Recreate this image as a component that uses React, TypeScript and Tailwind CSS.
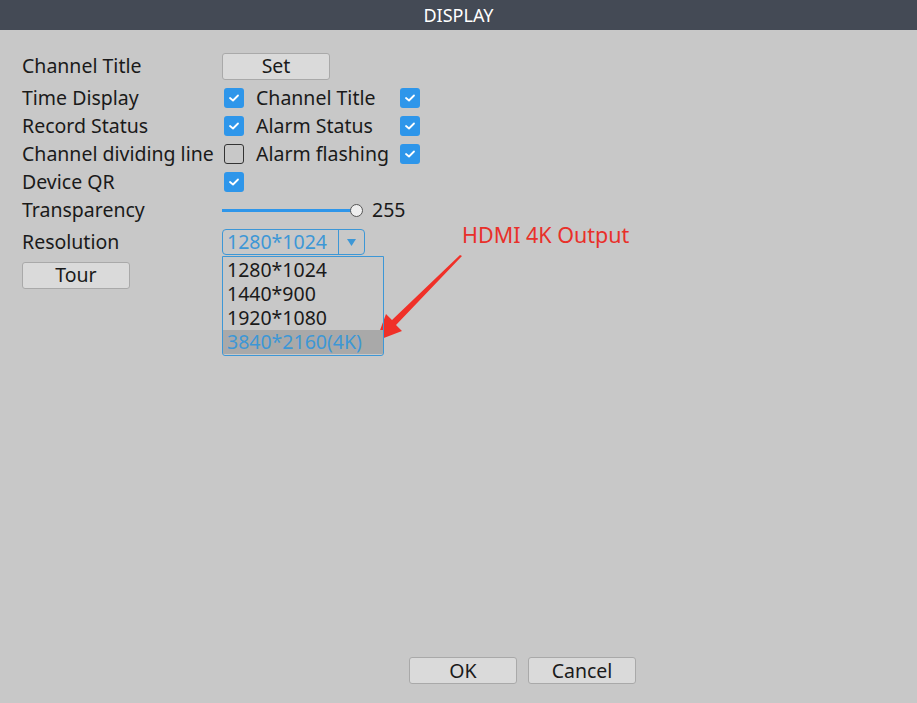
const font = { fontFamily: '"Noto Sans", "Open Sans", sans-serif' };

function Check({ on }: { on: boolean }) {
  if (!on) {
    return <div className="w-5 h-5 rounded-[3px] border-[1.5px] border-[#333]" />;
  }
  return (
    <div className="w-5 h-5 rounded-[3px] bg-[#2e96ea] flex items-center justify-center">
      <svg width="12" height="10" viewBox="0 0 12 10">
        <path d="M2 5 L5 7.5 L10 2.5" fill="none" stroke="#fff" strokeWidth="1.8" strokeLinecap="round" strokeLinejoin="round" />
      </svg>
    </div>
  );
}

function Btn({ label, className = "" }: { label: string; className?: string }) {
  return (
    <button
      className={`w-[108px] h-[27px] rounded-[3px] border border-[#a9a9a9] bg-[#dadada] text-[19.5px] leading-none text-[#1a1a1a] flex items-center justify-center ${className}`}
    >
      {label}
    </button>
  );
}

const options = ["1280*1024", "1440*900", "1920*1080", "3840*2160(4K)"];

export default function App() {
  return (
    <div className="w-[917px] h-[703px] bg-[#c8c8c8] flex flex-col text-[#1a1a1a] overflow-hidden" style={font}>
      <div className="h-[30px] bg-[#444a55] flex items-center justify-center text-white text-[18px]">
        DISPLAY
      </div>

      <div className="flex-1 relative pt-[22px] pl-[22px] text-[19.5px]">
        <div className="flex items-center h-[28px]">
          <p className="w-[200px]">Channel Title</p>
          <Btn label="Set" />
        </div>

        <div className="flex items-center h-[28px] mt-[4px]">
          <p className="w-[200px]">Time Display</p>
          <div className="flex items-center pl-[2px]">
            <Check on />
            <p className="w-[156px] pl-[12px]">Channel Title</p>
            <Check on />
          </div>
        </div>

        <div className="flex items-center h-[28px]">
          <p className="w-[200px]">Record Status</p>
          <div className="flex items-center pl-[2px]">
            <Check on />
            <p className="w-[156px] pl-[12px]">Alarm Status</p>
            <Check on />
          </div>
        </div>

        <div className="flex items-center h-[28px]">
          <p className="w-[200px] whitespace-nowrap">Channel dividing line</p>
          <div className="flex items-center pl-[2px]">
            <Check on={false} />
            <p className="w-[156px] pl-[12px]">Alarm flashing</p>
            <Check on />
          </div>
        </div>

        <div className="flex items-center h-[28px]">
          <p className="w-[200px]">Device QR</p>
          <div className="pl-[2px]">
            <Check on />
          </div>
        </div>

        <div className="flex items-center h-[28px]">
          <p className="w-[200px]">Transparency</p>
          <div className="flex items-center">
            <div className="w-[129px] h-[3px] bg-[#2e96ea]" />
            <div className="w-[13px] h-[13px] rounded-full border border-[#555] bg-[#eeeeee] -ml-[1px]" />
            <span className="ml-[9px]">255</span>
          </div>
        </div>

        <div className="flex items-center h-[28px] mt-[4px]">
          <p className="w-[200px]">Resolution</p>
          <div className="relative">
            <div className="w-[143px] h-[26px] border border-[#3d97d6] rounded-[4px] flex items-center">
              <span className="flex-1 pl-[4px] text-[#3d97d6] leading-none">1280*1024</span>
              <div className="w-[26px] h-full border-l border-[#3d97d6] flex items-center justify-center">
                <svg width="9" height="7" viewBox="0 0 9 7">
                  <path d="M0 0 H9 L4.5 7 Z" fill="#3d97d6" />
                </svg>
              </div>
            </div>
            <div className="absolute left-0 top-[27px] w-[162px] h-[100px] border border-[#3d97d6] rounded-b-[3px] pt-[1px] z-10">
              {options.map((o, i) => (
                <div
                  key={o}
                  className={`h-[24px] flex items-center pl-[4px] leading-none ${
                    i === 3 ? "bg-[#a9a9a9] text-[#3d97d6]" : ""
                  }`}
                >
                  {o}
                </div>
              ))}
            </div>
          </div>
        </div>

        <div className="flex items-center h-[28px] mt-[5px]">
          <Btn label="Tour" />
        </div>

        <p className="absolute left-[462px] top-[194px] text-[21.5px] text-[#e8302a] leading-none">
          HDMI 4K Output
        </p>
        <svg className="absolute left-0 top-0 pointer-events-none" width="917" height="673" viewBox="0 30 917 673">
          <polygon
            points="462,256 460,255 392,320 386,314 376,341 402,331 396,325"
            fill="#f03028"
          />
        </svg>
      </div>

      <div className="flex gap-[11px] pl-[409px] pb-[19px]">
        <Btn label="OK" />
        <Btn label="Cancel" />
      </div>
    </div>
  );
}
